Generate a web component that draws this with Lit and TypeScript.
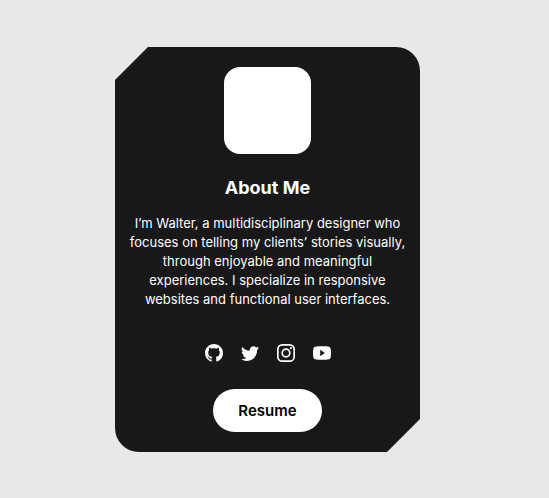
import { LitElement, html, css, svg } from "lit";
import { customElement } from "lit/decorators.js";

const links = [
  {
    label: "GitHub",
    shape: svg`<path d="M8 0C3.58 0 0 3.58 0 8c0 3.54 2.29 6.53 5.47 7.59.4.07.55-.17.55-.38 0-.19-.01-.82-.01-1.49-2.01.37-2.53-.49-2.69-.94-.09-.23-.48-.94-.82-1.13-.28-.15-.68-.52-.01-.53.63-.01 1.08.58 1.23.82.72 1.21 1.87.87 2.33.66.07-.52.28-.87.51-1.07-1.78-.2-3.64-.89-3.64-3.95 0-.87.31-1.59.82-2.15-.08-.2-.36-1.02.08-2.12 0 0 .67-.21 2.2.82.64-.18 1.32-.27 2-.27s1.36.09 2 .27c1.53-1.04 2.2-.82 2.2-.82.44 1.1.16 1.92.08 2.12.51.56.82 1.27.82 2.15 0 3.07-1.87 3.75-3.65 3.95.29.25.54.73.54 1.48 0 1.07-.01 1.93-.01 2.2 0 .21.15.46.55.38A8.01 8.01 0 0 0 16 8c0-4.42-3.58-8-8-8"/>`,
  },
  {
    label: "Twitter",
    shape: svg`<path d="M5.026 15c6.038 0 9.341-5.003 9.341-9.334q.002-.211-.006-.422A6.7 6.7 0 0 0 16 3.542a6.7 6.7 0 0 1-1.889.518 3.3 3.3 0 0 0 1.447-1.817 6.5 6.5 0 0 1-2.087.793A3.286 3.286 0 0 0 7.875 6.03a9.32 9.32 0 0 1-6.767-3.429 3.29 3.29 0 0 0 1.018 4.382A3.3 3.3 0 0 1 .64 6.575v.045a3.29 3.29 0 0 0 2.632 3.218 3.2 3.2 0 0 1-.865.115 3 3 0 0 1-.614-.057 3.28 3.28 0 0 0 3.067 2.277A6.6 6.6 0 0 1 .78 13.58a6 6 0 0 1-.78-.045A9.34 9.34 0 0 0 5.026 15"/>`,
  },
  {
    label: "Instagram",
    shape: svg`<rect x=".75" y=".75" width="14.5" height="14.5" rx="4" fill="none" stroke="currentColor" stroke-width="1.5"/><circle cx="8" cy="8" r="3.39" fill="none" stroke="currentColor" stroke-width="1.5"/><circle cx="12.27" cy="3.73" r=".96"/>`,
  },
  {
    label: "YouTube",
    shape: svg`<path d="M8.05 2c-1.5 0-4.9.1-6.2.43A2 2 0 0 0 .43 3.85C.1 5 0 7 0 7.96c0 1 .1 3 .43 4.19a2 2 0 0 0 1.42 1.42C3 13.9 6.5 14 8 14s5-.1 6.15-.43a2 2 0 0 0 1.42-1.42C15.9 11 16 9 16 8s-.1-3-.43-4.15a2 2 0 0 0-1.42-1.42C13 2.1 9.6 2 8.05 2M6.4 5.21l4.16 2.79L6.4 10.78z"/>`,
  },
];

@customElement("app-root")
export class AppRoot extends LitElement {
  static styles = css`
    :host {
      display: grid;
      place-items: center;
      box-sizing: border-box;
      min-height: 100vh;
      padding: 17px 30px 16px 16px;
      background: #e8e8e8;
      font-family: Inter, "Liberation Sans", sans-serif;
    }
    .card {
      display: flex;
      flex-direction: column;
      align-items: center;
      box-sizing: border-box;
      width: 100%;
      max-width: 305px;
      padding: 20px 14px;
      border-radius: 24px;
      background: #181818;
      color: #fff;
      text-align: center;
      clip-path: polygon(33px 0, 100% 0, 100% calc(100% - 33px), calc(100% - 33px) 100%, 0 100%, 0 33px);
    }
    .avatar {
      width: 87px;
      height: 87px;
      border-radius: 16px;
      background: #fff;
    }
    h1 {
      margin: 22px 0 14px;
      font-size: 18px;
      line-height: 24px;
      font-weight: 700;
    }
    p {
      margin: 0;
      font-size: 13px;
      line-height: 19px;
    }
    .social {
      display: flex;
      gap: 18px;
      margin: 35px 0 27px;
    }
    .social a {
      display: block;
      color: inherit;
    }
    .social svg {
      display: block;
      width: 18px;
      height: 18px;
      fill: currentColor;
    }
    button {
      padding: 12px 25px 11px;
      border: 0;
      border-radius: 22px;
      background: #fff;
      color: #000;
      font: 600 15px/20px Inter, "Liberation Sans", sans-serif;
      cursor: pointer;
    }
  `;

  render() {
    return html`
      <main class="card">
        <div class="avatar"></div>
        <h1>About Me</h1>
        <p>
          I’m Walter, a multidisciplinary designer who focuses on telling my
          clients’ stories visually, through enjoyable and meaningful
          experiences. I specialize in responsive websites and functional user
          interfaces.
        </p>
        <nav class="social">
          ${links.map(
            (link) => html`<a href="#" aria-label=${link.label}>
              <svg viewBox="0 0 16 16" aria-hidden="true">${link.shape}</svg>
            </a>`
          )}
        </nav>
        <button type="button">Resume</button>
      </main>
    `;
  }
}
